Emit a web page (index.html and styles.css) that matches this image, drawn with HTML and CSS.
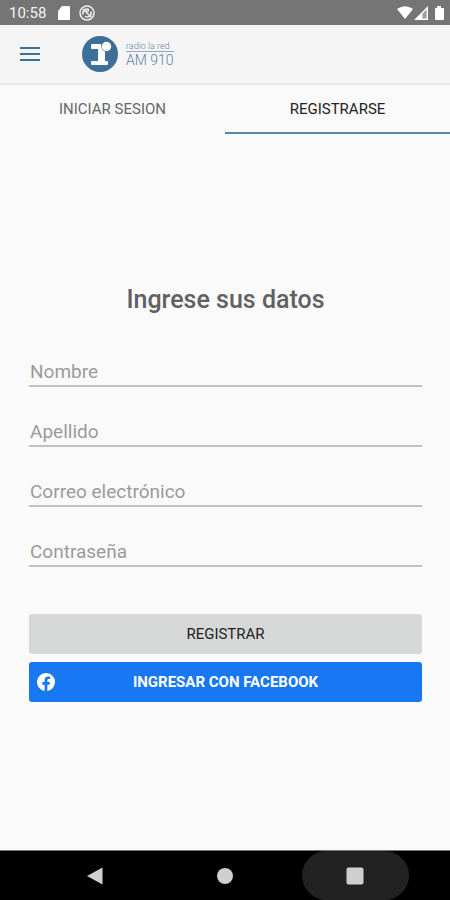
FILE: index.html
```html
<!DOCTYPE html>
<html lang="es">
<head>
<meta charset="utf-8">
<meta name="viewport" content="width=device-width, initial-scale=1">
<title>Radio La Red AM 910</title>
<link rel="stylesheet" href="styles.css">
</head>
<body>
<div class="status">
  <span class="clock">10:58</span>
  <svg width="14" height="16" viewBox="0 0 14 16" fill="#fff" aria-hidden="true"><path d="M5 1h7q1 0 1 1v12q0 1-1 1H2q-1 0-1-1V6z"/></svg>
  <svg class="sync" width="16" height="16" viewBox="0 0 16 16" fill="none" stroke="#f0f0f0" aria-hidden="true"><circle cx="8" cy="8" r="7" stroke-width="1.5"/><path stroke-width="1.5" d="M4.2 9.5A4 4 0 0 1 10 4.6M11.8 6.5A4 4 0 0 1 6 11.4M4 4l8 8M6 6.5l4-.8"/></svg>
  <svg class="system" width="48" height="16" viewBox="0 0 48 16" fill="#fff" aria-hidden="true"><path d="M0 4Q8-1.5 16 4L8 14z"/><path fill-rule="evenodd" d="M17 15 31 1v14zM25.500 13.500h4V4.500l-4 4.200z"/><path d="M25.500 8.700 29.500 4.500v9h-4z" fill-opacity="0.300"/><path d="M40 1h4v2h2q1 0 1 1v10q0 1-1 1h-7q-1 0-1-1V4q0-1 1-1h1z"/></svg>
</div>
<header class="appbar">
  <button class="menu" type="button" aria-label="Menú"><svg width="20" height="14" viewBox="0 0 20 14" fill="#3a7298"><path d="M0 0h20v2H0zM0 6h20v2H0zM0 12h20v2H0z"/></svg></button>
  <a class="brand" href="#">
    <svg width="36" height="36" viewBox="0 0 36 36" aria-hidden="true"><circle cx="18" cy="18" r="18" fill="#3c7098"/><path fill="#fff" d="M10 8h9q0 6 4 7.500V25h2q1 0 1 1v2q0 1-1 1H10q-1 0-1-1v-2q0-1 1-1h6V13h-6q-1 0-1-1V9q0-1 1-1z"/><circle cx="24.500" cy="10.500" r="4.700" fill="#fff"/></svg>
    <span class="name"><span class="small">radio la red</span><span class="big">AM 910</span></span>
  </a>
</header>
<nav class="tabs">
  <a class="tab" href="#">INICIAR SESION</a>
  <a class="tab active" href="#" aria-current="page">REGISTRARSE</a>
</nav>
<main>
  <form>
    <h1>Ingrese sus datos</h1>
    <input type="text" placeholder="Nombre" aria-label="Nombre">
    <input type="text" placeholder="Apellido" aria-label="Apellido">
    <input type="email" placeholder="Correo electrónico" aria-label="Correo electrónico">
    <input type="password" placeholder="Contraseña" aria-label="Contraseña">
    <div class="actions">
      <button class="btn" type="submit">REGISTRAR</button>
      <button class="btn facebook" type="button"><svg width="18" height="18" viewBox="0 0 24 24" fill="#fff" aria-hidden="true"><path d="M24 12a12 12 0 1 0-13.900 11.900v-8.400H7.100V12h3V9.400c0-3 1.800-4.700 4.500-4.700 1.300 0 2.700.2 2.700.2v3h-1.500c-1.500 0-2 .9-2 1.900V12h3.400l-.5 3.500h-2.900v8.400A12 12 0 0 0 24 12z"/></svg>INGRESAR CON FACEBOOK</button>
    </div>
  </form>
</main>
<footer class="sysnav">
  <button type="button" aria-label="Atrás"><svg width="18" height="18" viewBox="0 0 18 18" fill="#cfcfcf"><path d="M1 9 16.500 0.500v17z"/></svg></button>
  <button type="button" aria-label="Inicio"><svg width="18" height="18" viewBox="0 0 18 18" fill="#cfcfcf"><circle cx="9" cy="9" r="8"/></svg></button>
  <button class="pressed" type="button" aria-label="Recientes"><svg width="18" height="18" viewBox="0 0 18 18" fill="#cfcfcf"><rect x="0.500" y="0.500" width="17" height="17" rx="2"/></svg></button>
</footer>
</body>
</html>
```
FILE: styles.css
```css
* { box-sizing: border-box; }
body {
  margin: 0;
  min-height: 100vh;
  display: flex;
  flex-direction: column;
  background: #fafafa;
  color: #222;
  font-family: Roboto, "Liberation Sans", sans-serif;
  font-size: 15px;
}
button { border: 0; padding: 0; background: none; font: inherit; color: inherit; }
a { color: inherit; text-decoration: none; }
svg { display: block; }

.status {
  display: flex;
  align-items: center;
  height: 25px;
  padding: 0 5px 0 9px;
  background: #757575;
  color: #f4f4f4;
}
.clock { width: 48px; }
.sync { margin-left: 8px; }
.system { margin-left: auto; }

.appbar {
  display: flex;
  align-items: center;
  height: 60px;
  padding: 0 20px;
  background: #f5f5f5;
  border-bottom: 2px solid #e9e9e9;
}
.menu { width: 62px; }
.brand { display: flex; align-items: center; gap: 8px; }
.name { display: flex; flex-direction: column; color: #5f819f; font-weight: 300; }
.small { border-bottom: 1px solid #8fa8bd; font-size: 9px; line-height: 10px; }
.big { font-size: 14px; line-height: 16px; }

.tabs { display: flex; height: 49px; }
.tab {
  flex: 1;
  display: flex;
  align-items: center;
  justify-content: center;
  border-bottom: 2px solid transparent;
  color: #666;
}
.active { border-color: #5b86a8; color: #222; }

main { flex: 1; display: flex; align-items: center; padding: 2px 28px 0 29px; }
form { width: 100%; display: flex; flex-direction: column; }
h1 {
  margin: 0 0 28px;
  color: #616161;
  font-size: 25px;
  font-weight: 500;
  line-height: 30px;
  text-align: center;
}
input {
  width: 100%;
  height: 44px;
  margin-bottom: 16px;
  padding: 16px 1px 0;
  border: 0;
  border-bottom: 2px solid #c2c2c2;
  border-radius: 0;
  background: none;
  color: #444;
  font: 400 19px Roboto, "Liberation Sans", sans-serif;
}
input::placeholder { color: #9a9a9a; opacity: 1; }
.actions { display: grid; gap: 8px; margin-top: 31px; }
.btn {
  display: flex;
  align-items: center;
  justify-content: center;
  height: 40px;
  border-radius: 3px;
  background: #d6d8d7;
}
.facebook { position: relative; background: #1877f2; color: #fff; font-weight: 700; }
.facebook svg { position: absolute; left: 8px; }

.sysnav {
  display: flex;
  justify-content: center;
  gap: 23px;
  height: 50px;
  border-top: 1px solid #777;
  background: #000;
}
.sysnav button {
  flex: 0 1 107px;
  display: flex;
  align-items: center;
  justify-content: center;
  border-radius: 25px;
}
.pressed { background: #222; }
```
